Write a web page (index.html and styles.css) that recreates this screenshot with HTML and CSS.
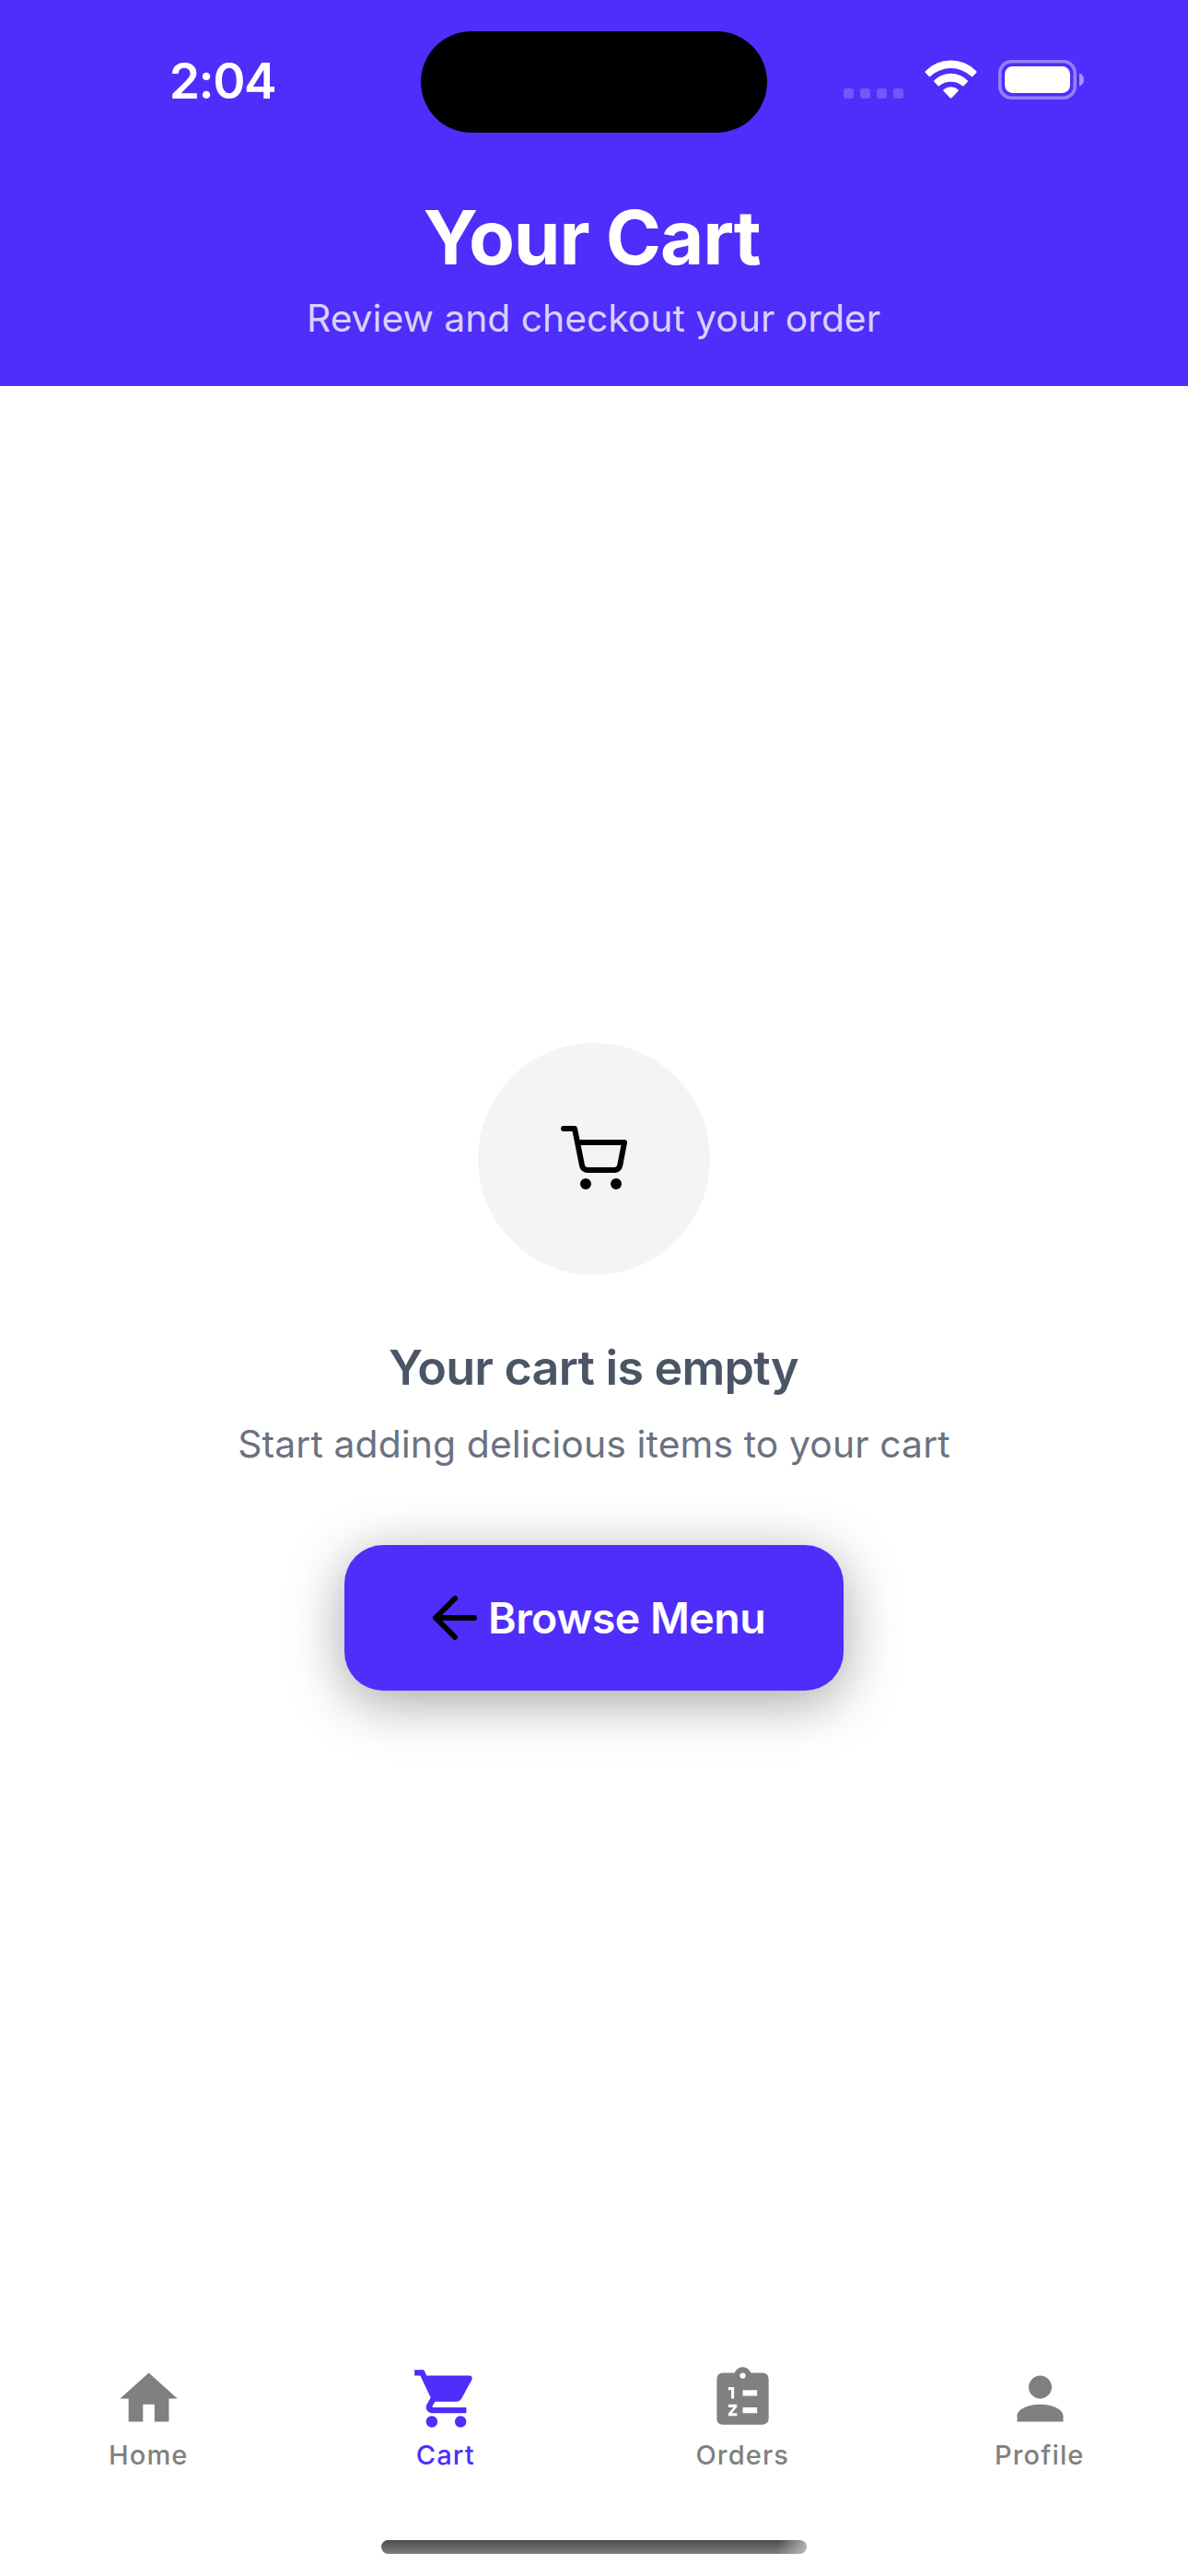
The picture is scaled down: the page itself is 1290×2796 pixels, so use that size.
FILE: index.html
```
<!DOCTYPE html>
<html lang="en">
<head>
<meta charset="utf-8">
<title>Your Cart</title>
<link rel="stylesheet" href="styles.css">
</head>
<body>
<div class="screen">
  <header class="header">
    <div class="status">
      <div class="status-time">2:04</div>
      <div class="island"></div>
      <div class="status-icons">
        <svg width="65" height="43" viewBox="0 0 65 43" fill="#fff" fill-opacity=".2">
          <rect x="0" y="31" width="11" height="11" rx="3"/>
          <rect x="18" y="31" width="11" height="11" rx="3"/>
          <rect x="36" y="31" width="11" height="11" rx="3"/>
          <rect x="54" y="31" width="11" height="11" rx="3"/>
        </svg>
        <svg width="57" height="43" viewBox="0 0 57.2 43" fill="#fff">
          <path d="M.8 12.2A38.7 38.7 0 0 1 56.4 12.2Q57.2 13 56.5 13.7L52.4 17.9Q51.7 18.6 51 17.9A32.8 32.8 0 0 0 6.2 17.9Q5.5 18.6 4.8 17.9L.7 13.7Q0 13 .8 12.2z"/>
          <path d="M10.3 22.4A25.9 25.9 0 0 1 46.9 22.4Q47.6 23.1 46.9 23.8L42.6 28.2Q41.9 28.9 41.2 28.2A20.4 20.4 0 0 0 16 28.2Q15.3 28.9 14.6 28.2L10.3 23.8Q9.6 23.1 10.3 22.4z"/>
          <path d="M20.6 32.3A12 12 0 0 1 36.6 32.3Q37.3 33 36.6 33.7L29.5 41.2Q28.6 42.1 27.7 41.2L20.6 33.7Q19.9 33 20.6 32.3z"/>
        </svg>
        <svg width="93" height="43" viewBox="0 0 93 43">
          <rect x="1.8" y="1.8" width="81.4" height="39.4" rx="12.5" fill="none" stroke="#fff" stroke-opacity=".4" stroke-width="3.6"/>
          <rect x="7" y="7" width="71" height="29" rx="8.5" fill="#fff"/>
          <path d="M88 14.6c3 1 5 3.6 5 7s-2 6-5 7z" fill="#fff" fill-opacity=".5"/>
        </svg>
      </div>
    </div>
    <h1 class="title">Your Cart</h1>
    <p class="subtitle">Review and checkout your order</p>
  </header>

  <main class="empty">
    <div class="empty-icon">
      <svg width="72" height="72" viewBox="0 0 24 24" fill="none" stroke="#000" stroke-width="2" stroke-linecap="round" stroke-linejoin="round">
        <circle cx="9" cy="21" r="1"/>
        <circle cx="20" cy="21" r="1"/>
        <path d="M1 1h4l2.68 13.39a2 2 0 0 0 2 1.61h9.72a2 2 0 0 0 2-1.61L23 6H6"/>
      </svg>
    </div>
    <h2 class="empty-title">Your cart is empty</h2>
    <p class="empty-text">Start adding delicious items to your cart</p>
    <button class="browse">
      <svg width="72" height="72" viewBox="0 0 24 24" fill="none" stroke="#000" stroke-width="2" stroke-linecap="round" stroke-linejoin="round">
        <path d="M19 12H5M12 19l-7-7 7-7"/>
      </svg>
      <span>Browse Menu</span>
    </button>
  </main>

  <nav class="tabs">
    <a class="tab">
      <svg class="tab-icon" viewBox="0 0 24 24"><path d="M10 20v-6h4v6h5v-8h3L12 3 2 12h3v8z"/></svg>
      <span>Home</span>
    </a>
    <a class="tab tab-active">
      <svg class="tab-icon" viewBox="0 0 24 24"><path d="M17 18a2 2 0 1 0 0 4 2 2 0 0 0 0-4M1 2v2h2l3.6 7.59-1.36 2.45c-.15.28-.24.61-.24.96a2 2 0 0 0 2 2h12v-2H7.42a.25.25 0 0 1-.25-.25c0-.05.01-.09.03-.12L8.1 13h7.45c.75 0 1.41-.42 1.75-1.03l3.58-6.47c.07-.16.12-.33.12-.5a1 1 0 0 0-1-1H5.21l-.94-2M7 18a2 2 0 1 0 0 4 2 2 0 0 0 0-4"/></svg>
      <span>Cart</span>
    </a>
    <a class="tab">
      <svg class="tab-icon" viewBox="0 0 24 24"><path fill-rule="evenodd" d="M19 3h-4.18C14.4 1.84 13.3 1 12 1S9.6 1.84 9.18 3H5a2 2 0 0 0-2 2v14c0 1.1.9 2 2 2h14a2 2 0 0 0 2-2V5a2 2 0 0 0-2-2zm-7 0a1 1 0 1 1 0 2 1 1 0 0 1 0-2zM7 8h2v4H8V9H7zM12 9h5v2h-5zM7 14h3v.9L8.2 17H10v1H7v-.9L8.8 15H7zM12 15h5v2h-5z"/></svg>
      <span>Orders</span>
    </a>
    <a class="tab">
      <svg class="tab-icon" viewBox="0 0 24 24"><path d="M12 4a4 4 0 1 1 0 8 4 4 0 0 1 0-8m0 10c4.42 0 8 1.79 8 4v2H4v-2c0-2.21 3.58-4 8-4z"/></svg>
      <span>Profile</span>
    </a>
  </nav>
  <div class="home-indicator"></div>
</div>
</body>
</html>
```
FILE: styles.css
```
* {
  box-sizing: border-box;
  margin: 0;
}

body {
  background: #fff;
  font-family: Inter, "Noto Sans", sans-serif;
}

.screen {
  display: flex;
  flex-direction: column;
  width: 1290px;
  height: 2796px;
  overflow: hidden;
}

.header {
  height: 419px;
  background: #4f2dfa;
  color: #fff;
  text-align: center;
}

.status {
  display: grid;
  grid-template-columns: 457px 376px 457px;
  align-items: center;
  height: 178px;
}

.status-time {
  padding-left: 26px;
  margin-top: -3px;
  font-size: 53.5px;
  font-weight: 560;
  line-height: 64px;
  letter-spacing: -1.4px;
}

.island {
  height: 110px;
  border-radius: 55px;
  background: #000;
}

.status-icons {
  display: flex;
  gap: 23px;
  margin-top: -5px;
  padding-left: 83px;
}

.title {
  margin-top: 30px;
  padding-right: 5px;
  font-size: 81.5px;
  font-weight: 700;
  line-height: 100px;
  letter-spacing: -1.1px;
}

.subtitle {
  margin-top: 7px;
  padding-right: 1px;
  font-size: 40.8px;
  font-weight: 400;
  line-height: 60px;
  color: rgba(255, 255, 255, .8);
}

.empty {
  flex: 1;
  display: flex;
  flex-direction: column;
  align-items: center;
  padding-top: 713px;
}

.empty-icon {
  display: flex;
  align-items: center;
  justify-content: center;
  width: 252px;
  height: 252px;
  border-radius: 50%;
  background: #f3f4f6;
}

.empty-title {
  margin-top: 59px;
  padding-right: 1px;
  font-size: 52px;
  font-weight: 590;
  line-height: 84px;
  letter-spacing: -.75px;
  color: #4a5565;
}

.empty-text {
  margin-top: 10px;
  font-size: 40.8px;
  line-height: 60px;
  letter-spacing: .14px;
  color: #6a7282;
}

.browse {
  display: flex;
  align-items: center;
  width: 542px;
  height: 158px;
  margin-top: 80px;
  padding: 0 84px;
  border: 0;
  border-radius: 42px;
  background: #4f2dfa;
  box-shadow: 0 12px 60px rgba(0, 0, 0, .36);
  color: #fff;
  font-family: inherit;
  font-size: 46.5px;
  font-weight: 580;
  line-height: 72px;
  letter-spacing: -.5px;
  white-space: nowrap;
}

.tabs {
  display: grid;
  grid-template-columns: repeat(4, 1fr);
  height: 191.5px;
}

.tab {
  display: flex;
  flex-direction: column;
  align-items: center;
  gap: 6px;
  color: #808080;
  font-size: 29px;
  font-weight: 470;
  line-height: 36px;
  letter-spacing: 1.15px;
}

.tab-active {
  color: #4f2dfa;
}

.tab-icon {
  width: 75px;
  height: 75px;
  margin-left: 1px;
  fill: currentColor;
}

.home-indicator {
  align-self: center;
  width: 462px;
  height: 15px;
  margin-bottom: 24px;
  border-radius: 8px;
  background:
    linear-gradient(100deg, rgba(190, 190, 190, 0) 93%, rgba(190, 190, 190, .9) 100%),
    linear-gradient(#4b4b4b, #7e7e7e);
}
```
